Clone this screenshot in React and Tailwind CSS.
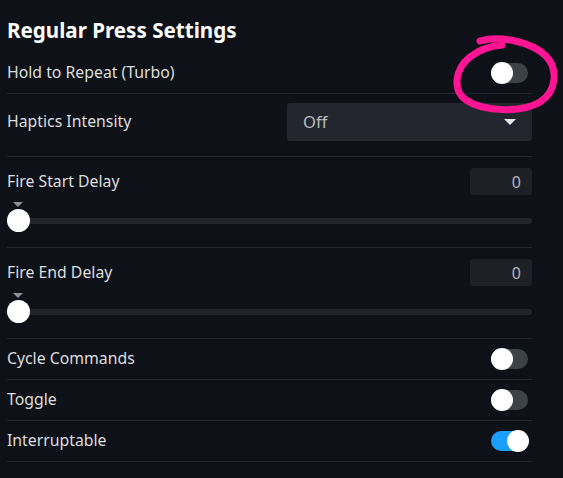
import React from "react";

const font = { fontFamily: '"Noto Sans", "Open Sans", Arial, sans-serif' };

function Toggle({ on }) {
  return (
    <div className={`relative h-[20px] w-[37px] rounded-full ${on ? "bg-[#1a9fff]" : "bg-[#3d4149]"}`}>
      <div
        className={`absolute top-[-1px] h-[22px] w-[22px] rounded-full bg-white ${on ? "right-[-1px]" : "left-0"}`}
      />
    </div>
  );
}

function ToggleRow({ label, on }) {
  return (
    <div className="flex h-[41px] items-center justify-between border-b border-[#23262e] pr-[4px]">
      <span className="text-[15.8px] text-[#dcdedf]">{label}</span>
      <Toggle on={on} />
    </div>
  );
}

function SliderRow({ label, value }) {
  return (
    <div className="border-b border-[#23262e] pt-[11px] pb-[23px]">
      <div className="flex items-center justify-between">
        <span className="text-[15.8px] text-[#dcdedf]">{label}</span>
        <div className="flex h-[27px] w-[62px] items-center justify-end rounded-[3px] bg-[#1d2027] pr-[11px] text-[16px] text-[#b3b7bb]">
          {value}
        </div>
      </div>
      <div className="relative mt-[23px] h-[6px] rounded-full bg-[#22252c]">
        <div className="absolute left-[6px] top-[-16px] h-0 w-0 border-x-[5px] border-t-[5px] border-x-transparent border-t-[#8b8f95]" />
        <div className="absolute left-0 top-[-9px] h-[23px] w-[23px] rounded-full bg-white" />
      </div>
    </div>
  );
}

export default function App() {
  return (
    <div className="relative h-[478px] w-[563px] overflow-hidden bg-[#0e1118]" style={font}>
      <div className="w-[532px] pl-[7px]">
        <h1 className="pt-[15px] text-[20.6px] font-bold leading-[30px] text-white">
          Regular Press Settings
        </h1>
        <div className="mt-[8px] flex h-[41px] items-center justify-between border-b border-[#23262e] pr-[4px]">
          <span className="text-[15.8px] text-[#dcdedf]">Hold to Repeat (Turbo)</span>
          <Toggle on={false} />
        </div>
        <div className="flex items-center justify-between border-b border-[#23262e] pt-[9px] pb-[15px]">
          <span className="text-[15.8px] text-[#dcdedf]">Haptics Intensity</span>
          <div className="flex h-[38px] w-[245px] items-center justify-between rounded-[3px] bg-[#23262e] pl-[16px] pr-[16px]">
            <span className="text-[16.5px] text-[#b8bcbf]">Off</span>
            <div className="h-0 w-0 border-x-[6px] border-t-[6px] border-x-transparent border-t-[#e8e9ea]" />
          </div>
        </div>
        <SliderRow label="Fire Start Delay" value="0" />
        <SliderRow label="Fire End Delay" value="0" />
        <ToggleRow label="Cycle Commands" on={false} />
        <ToggleRow label="Toggle" on={false} />
        <ToggleRow label="Interruptable" on={true} />
      </div>
      <svg className="pointer-events-none absolute left-0 top-0" width="563" height="478" viewBox="0 0 563 478">
        <path
          d="M 480 41 C 500 35, 532 42, 546 56 C 559 70, 556 92, 540 102 C 522 113, 484 112, 466 100 C 452 90, 455 69, 470 57 C 479 50, 490 46, 502 45"
          fill="none"
          stroke="#ff1493"
          strokeWidth="7"
          strokeLinecap="round"
          strokeLinejoin="round"
        />
      </svg>
    </div>
  );
}
